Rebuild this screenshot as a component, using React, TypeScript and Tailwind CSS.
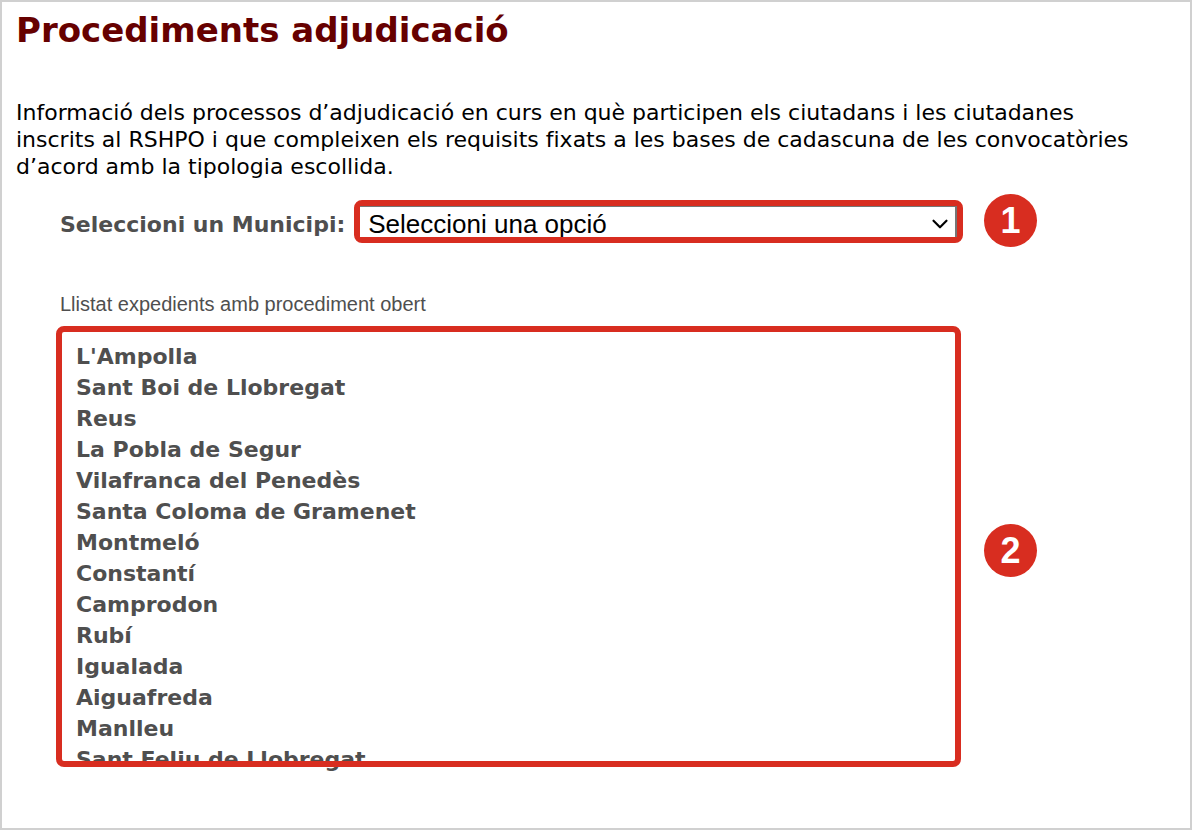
import { ChevronDown } from 'lucide-react';

const municipis = [
  "L'Ampolla",
  'Sant Boi de Llobregat',
  'Reus',
  'La Pobla de Segur',
  'Vilafranca del Penedès',
  'Santa Coloma de Gramenet',
  'Montmeló',
  'Constantí',
  'Camprodon',
  'Rubí',
  'Igualada',
  'Aiguafreda',
  'Manlleu',
  'Sant Feliu de Llobregat',
];

function StepBadge({ number }: { number: number }) {
  return (
    <span className="flex h-[53px] w-[53px] shrink-0 items-center justify-center rounded-full bg-[#d82d20] font-['Liberation_Sans',sans-serif] text-[36px] leading-none font-bold text-white">
      {number}
    </span>
  );
}

export default function App() {
  return (
    <main className="min-h-screen border-2 border-[#d0d0d0] bg-white px-3.5 pt-2 pb-[52px] font-['DejaVu_Sans',Verdana,sans-serif] text-[22px]">
      <h1 className="text-[34px] leading-[40px] font-bold text-[#660000]">Procediments adjudicació</h1>

      <p className="mt-[49px] max-w-[1130px] leading-[27px] text-black [font-variant-ligatures:none]">
        Informació dels processos d’adjudicació en curs en què participen els ciutadans i les ciutadanes
        inscrits al RSHPO i que compleixen els requisits fixats a les bases de cadascuna de les convocatòries
        d’acord amb la tipologia escollida.
      </p>

      {/* Municipality selector */}
      <div className="mt-3.5 ml-10 flex items-center gap-[21px] text-[#4f4f4f]">
        <div className="flex w-[907px] items-center gap-[9px] pt-0.5 pl-1">
          <label htmlFor="municipi" className="shrink-0 pt-1.5 font-bold">Seleccioni un Municipi:</label>
          <div className="relative min-w-0 flex-1 rounded-lg border-6 border-[#d82d20]">
            <select
              id="municipi"
              className="block h-[31px] w-full appearance-none border-t border-r-2 border-[#767676] bg-white pt-0.5 pr-10 pl-2 font-['Liberation_Sans',Arial,sans-serif] text-[26px] leading-[30px] text-black"
            >
              <option>Seleccioni una opció</option>
              {municipis.map((name) => (
                <option key={name}>{name}</option>
              ))}
            </select>
            <ChevronDown className="pointer-events-none absolute top-[5px] right-1 text-black" size={26} strokeWidth={2} />
          </div>
        </div>
        <StepBadge number={1} />
      </div>

      {/* Open procedures */}
      <h2 className="mt-11 ml-11 font-['Liberation_Sans',Arial,sans-serif] text-[20px] leading-[27px] text-[#4f4f4f]">
        Llistat expedients amb procediment obert
      </h2>
      <div className="mt-2 ml-10 flex items-center gap-[23px]">
        <div className="relative w-[905px] pt-[15px] pl-5">
          <ul className="leading-[31px] font-bold text-[#4f4f4f]">
            {municipis.map((name) => (
              <li key={name}>{name}</li>
            ))}
          </ul>
          <div className="pointer-events-none absolute inset-x-0 top-0 bottom-2 rounded-lg border-6 border-[#d82d20]" />
        </div>
        <StepBadge number={2} />
      </div>
    </main>
  );
}
